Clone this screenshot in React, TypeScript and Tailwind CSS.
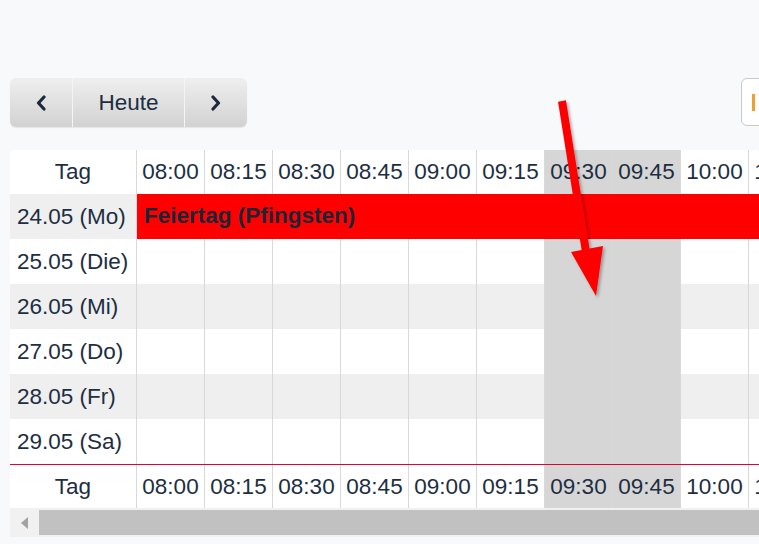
import React from 'react';

const times = ['08:00', '08:15', '08:30', '08:45', '09:00', '09:15', '09:30', '09:45', '10:00', '10:15'];
const marked = ['09:30', '09:45'];

const days = [
  { label: '24.05 (Mo)', holiday: 'Feiertag (Pfingsten)' },
  { label: '25.05 (Die)' },
  { label: '26.05 (Mi)' },
  { label: '27.05 (Do)' },
  { label: '28.05 (Fr)' },
  { label: '29.05 (Sa)' },
];

const TimeRow = ({ top }: { top?: boolean }) => (
  <div className={`flex h-[44px] bg-white ${top ? '' : 'border-t border-[#e2003b]'}`}>
    <div className="w-[126px] shrink-0 flex items-center justify-center">Tag</div>
    {times.map((t) => (
      <div
        key={t}
        className={`w-[68px] shrink-0 border-l border-[#d9d9d9] flex items-center justify-center ${
          marked.includes(t) ? 'bg-[#d6d6d6]' : ''
        }`}
      >
        {t}
      </div>
    ))}
  </div>
);

const App = () => {
  return (
    <div
      className="relative w-[759px] h-[544px] overflow-hidden bg-[#f8f9fb] text-[22.5px] text-[#1d2e42]"
      style={{ fontFamily: '"Liberation Sans", Arial, sans-serif' }}
    >
      <div className="flex justify-between pt-[78px] pl-[10px]">
        <div className="flex h-[49px] rounded-[6px] overflow-hidden bg-gradient-to-b from-[#efefef] to-[#d2d2d2] shadow-[0_1px_1px_rgba(0,0,0,0.08)]">
          <button className="w-[63px] flex items-center justify-center border-r border-[#f4f4f4]">
            <svg width="12" height="16" viewBox="0 0 12 16" fill="none">
              <path d="M9 2L3.5 8l5.5 6" stroke="#1b2b3d" strokeWidth="3.2" strokeLinecap="round" strokeLinejoin="round" />
            </svg>
          </button>
          <button className="w-[112px] flex items-center justify-center border-r border-[#f4f4f4]">Heute</button>
          <button className="flex-1 w-[62px] flex items-center justify-center">
            <svg width="12" height="16" viewBox="0 0 12 16" fill="none">
              <path d="M3 2l5.5 6L3 14" stroke="#1b2b3d" strokeWidth="3.2" strokeLinecap="round" strokeLinejoin="round" />
            </svg>
          </button>
        </div>
        <div className="w-[30px] h-[48px] -mr-[12px] rounded-[6px] border border-[#c9c9c9] bg-white flex items-center pl-[10px]">
          <div className="w-[3px] h-[17px] bg-[#f0a030]" />
        </div>
      </div>

      <div className="mt-[23px] ml-[10px] overflow-hidden rounded-t-[4px]">
        <TimeRow top />
        {days.map((d, i) => (
          <div key={d.label} className={`flex h-[45px] ${i % 2 === 0 ? 'bg-[#efefef]' : 'bg-white'}`}>
            <div className="w-[126px] shrink-0 flex items-center pl-[7px]">{d.label}</div>
            {d.holiday ? (
              <div className="flex-1 shrink-0 min-w-[680px] border-l border-[#d9d9d9] bg-[#ff0000] flex items-center pl-[7px] pb-[1px] font-bold text-[#1a2636]">
                {d.holiday}
              </div>
            ) : (
              times.map((t) => (
                <div
                  key={t}
                  className={`w-[68px] shrink-0 border-l border-[#d9d9d9] ${marked.includes(t) ? 'bg-[#d6d6d6]' : ''}`}
                />
              ))
            )}
          </div>
        ))}
        <TimeRow />
      </div>

      <div className="ml-[10px] h-[29px] bg-[#f1f1f1] flex items-center">
        <div className="w-[29px] flex items-center justify-center">
          <div className="w-0 h-0 border-y-[6px] border-y-transparent border-r-[7px] border-r-[#a3a3a3]" />
        </div>
        <div className="flex-1 h-[25px] bg-[#c1c1c1]" />
      </div>

      <svg className="absolute left-0 top-0 pointer-events-none" width="759" height="544">
        <defs>
          <filter id="sh" x="-20%" y="-20%" width="140%" height="140%">
            <feDropShadow dx="2" dy="2" stdDeviation="1.5" floodColor="#000" floodOpacity="0.3" />
          </filter>
        </defs>
        <g filter="url(#sh)">
          <line x1="562" y1="101" x2="586" y2="252" stroke="#ff0000" strokeWidth="8" />
          <polygon points="571,252 603,246 596,296" fill="#ff0000" />
        </g>
      </svg>
    </div>
  );
};

export default App;
